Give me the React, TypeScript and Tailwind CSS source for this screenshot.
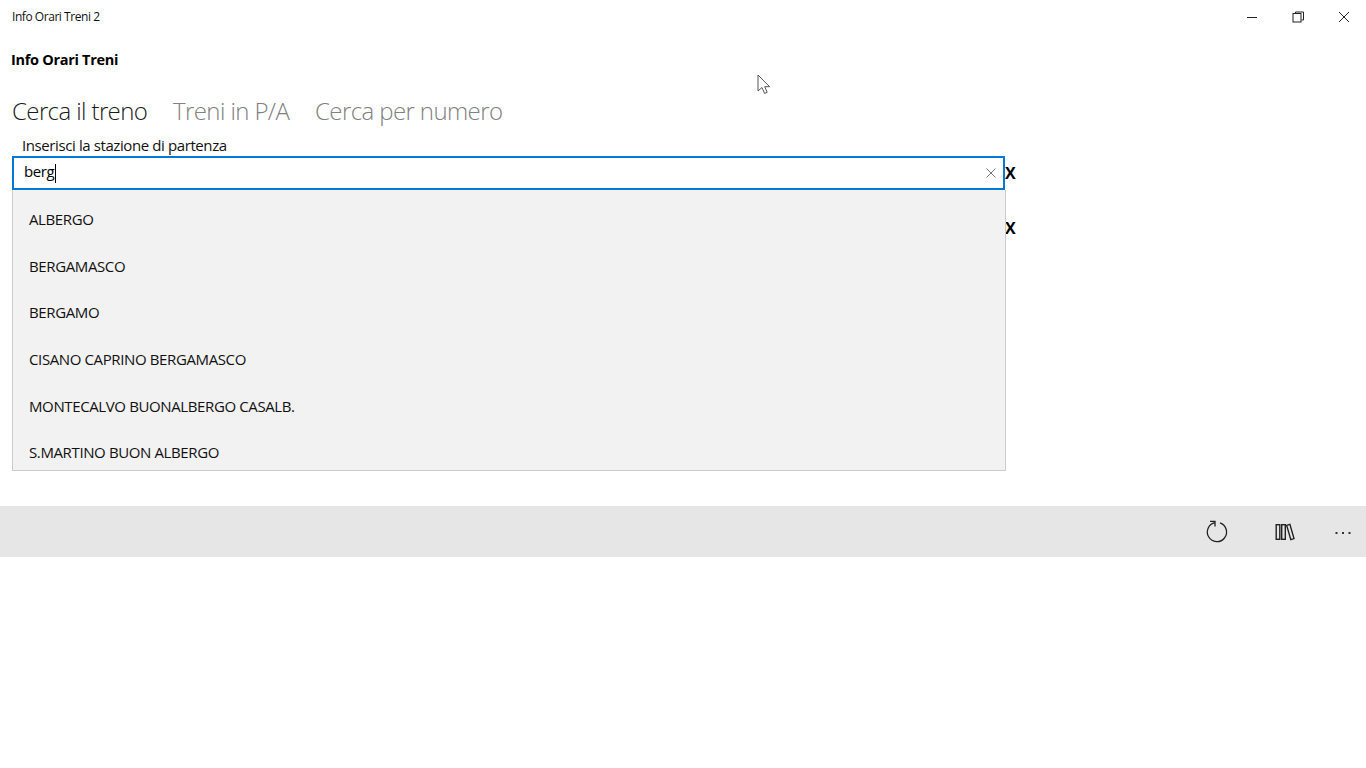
import React from "react";

const stations = [
  "ALBERGO",
  "BERGAMASCO",
  "BERGAMO",
  "CISANO CAPRINO BERGAMASCO",
  "MONTECALVO BUONALBERGO CASALB.",
  "S.MARTINO BUON ALBERGO",
];

export default function App() {
  return (
    <div className="relative h-[768px] w-[1366px] overflow-hidden bg-white font-['Open_Sans','Noto_Sans',sans-serif] text-black">
      {/* Title bar */}
      <div className="flex h-[34px] items-center justify-between">
        <span className="pl-3 text-[12px] tracking-[-0.45px] text-[#111]">Info Orari Treni 2</span>
        <div className="flex items-center">
          <div className="flex h-[34px] w-[46px] translate-x-px items-center justify-center">
            <svg width="12" height="12" viewBox="0 0 12 12"><path d="M1 6.5h10" stroke="#222" strokeWidth="1" /></svg>
          </div>
          <div className="flex h-[34px] w-[46px] translate-x-px items-center justify-center">
            <svg width="12" height="12" viewBox="0 0 12 12" fill="none" stroke="#222"><path d="M3.5 2.5V1h8v8H9.5" /><rect x="1" y="2.5" width="8" height="8.5" /></svg>
          </div>
          <div className="flex h-[34px] w-[46px] translate-x-px items-center justify-center">
            <svg width="12" height="12" viewBox="0 0 12 12"><path d="M1 1l10 10M11 1L1 11" stroke="#222" strokeWidth="1" /></svg>
          </div>
        </div>
      </div>

      <div className="pl-[11px] pt-[15px] text-[14.5px] font-bold leading-[22px] tracking-[-0.3px]">Info Orari Treni</div>

      {/* Tabs */}
      <div className="flex gap-[25.8px] pl-3 pt-[23px] text-[24px] font-light leading-[34px] tracking-[-0.6px]">
        <span className="text-[#1a1a1a]">Cerca il treno</span>
        <span className="text-[#808080]">Treni in P/A</span>
        <span className="text-[#808080]">Cerca per numero</span>
      </div>

      {/* Form */}
      <div className="relative pl-3 pt-[7px]">
        <div className="pl-[10px] text-[15px] leading-[20px] tracking-[-0.4px] text-[#111]">Inserisci la stazione di partenza</div>
        <div className="mt-px flex items-center">
          <div className="flex h-[34px] w-[993px] items-center justify-between border-2 border-[#0078d7] pl-[10px] pr-[6px]">
            <span className="flex h-[20px] -translate-y-[2px] items-center text-[15px] tracking-[-0.38px]">
              berg<span className="ml-px h-[19px] w-px translate-y-[2px] bg-black" />
            </span>
            <svg width="12" height="12" viewBox="0 0 12 12"><path d="M1.5 1.5l9 9M10.5 1.5l-9 9" stroke="#777" strokeWidth="1" /></svg>
          </div>
          <span className="text-[16px] font-bold leading-none">X</span>
        </div>
        <div className="h-[21px]"></div>
        <div className="flex h-[33px] items-center pl-[993px]">
          <span className="text-[16px] font-bold leading-none">X</span>
        </div>

        {/* Suggestion list */}
        <div className="absolute left-3 top-[62px] h-[281px] w-[994px] overflow-hidden border border-t-0 border-[#cccccc] bg-[#f2f2f2]">
          <ul className="pt-[6px]">
            {stations.map((s) => (
              <li key={s} className="flex h-[46.67px] items-center pl-4 text-[15px] tracking-[-0.38px] text-[#111]">
                {s}
              </li>
            ))}
          </ul>
        </div>
      </div>

      {/* Command bar */}
      <div className="absolute bottom-[211px] left-0 flex h-[51px] w-full items-center justify-end bg-[#e6e6e6]">
        <svg className="absolute left-[1205px] top-[13px]" width="24" height="25" viewBox="0 0 24 25" fill="none" stroke="#222" strokeWidth="1.3">
          <path d="M15 3.9A9.6 9.6 0 1 1 10 3.6" />
          <path d="M5 2.4H10V7.5" />
        </svg>
        <svg className="absolute left-[1275px] top-[17px]" width="20" height="18" viewBox="0 0 20 18" fill="none" stroke="#222" strokeWidth="1.4">
          <rect x="1.2" y="1.7" width="3.6" height="14.6" />
          <rect x="6.7" y="1.7" width="3.6" height="14.6" />
          <path d="M11.7 2.4 14.9 1.4 19 15.6 15.8 16.6Z" />
        </svg>
        <svg className="absolute left-[1335px] top-[25px]" width="16" height="4" viewBox="0 0 16 4" fill="#333">
          <rect x="0.5" y="1" width="2" height="2" />
          <rect x="7" y="1" width="2" height="2" />
          <rect x="13.5" y="1" width="2" height="2" />
        </svg>
      </div>

      {/* Mouse pointer */}
      <svg className="absolute left-[757px] top-[74px]" width="14" height="22" viewBox="0 0 14 22" fill="#fff" stroke="#555" strokeWidth="1">
        <path d="M1 1v16l4-3.5 2.6 6 2.6-1.2-2.5-5.6H12.6Z" />
      </svg>
    </div>
  );
}
